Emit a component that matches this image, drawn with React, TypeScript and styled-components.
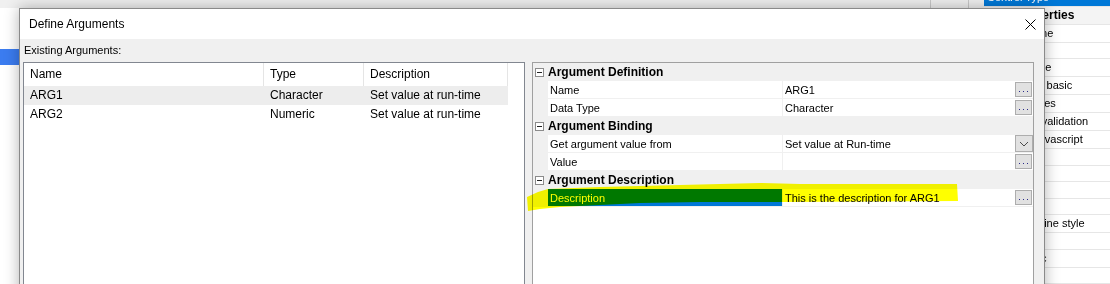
import React from "react";
import styled, { createGlobalStyle } from "styled-components";

const GlobalStyle = createGlobalStyle`
  html, body { margin: 0; padding: 0; background: #ffffff; }
  body { font-family: "Liberation Sans", Arial, sans-serif; color: #000; }
  * { box-sizing: border-box; }
`;

const Desktop = styled.div`
  position: relative;
  width: 1110px;
  height: 284px;
  overflow: hidden;
  background: #ffffff;
  display: flex;
  isolation: isolate;
`;

/* ---------- background application ---------- */
const BackLeft = styled.div`
  width: 984px;
  display: flex;
  flex-direction: column;
`;

const TopStrip = styled.div`
  height: 8px;
  background: #f0f0f0;
  display: flex;
  justify-content: flex-end;
`;

const StripCell = styled.div<{ $w: number }>`
  width: ${(p) => p.$w}px;
  border-left: 1px solid #c9c9c9;
`;

const TreeSelection = styled.div`
  margin-top: 41px;
  width: 20px;
  height: 16px;
  background: #3b7cf0;
`;

const BackRight = styled.div`
  flex: 1;
  margin-top: -11px;
  display: flex;
  flex-direction: column;
  font-size: 11px;
`;

const PanelRow = styled.div<{ $kind?: "selected" | "category" }>`
  height: 18px;
  line-height: 17px;
  border-bottom: 1px solid #e6e6e6;
  white-space: nowrap;
  padding-left: ${(p) => (p.$kind === "selected" ? 3 : p.$kind === "category" ? 31 : 40)}px;
  background: ${(p) =>
    p.$kind === "selected" ? "#0078d7" : p.$kind === "category" ? "#f4f4f4" : "#ffffff"};
  color: ${(p) => (p.$kind === "selected" ? "#ffffff" : "#000")};
  font-weight: ${(p) => (p.$kind === "category" ? "bold" : "normal")};
  font-size: ${(p) => (p.$kind === "category" ? 12 : 11)}px;
`;

/* ---------- dialog ---------- */
const Dialog = styled.section`
  position: absolute;
  left: 19px;
  top: 8px;
  width: 1026px;
  height: 300px;
  border: 1px solid #8a8a8a;
  background: #f0f0f0;
  box-shadow: 0 0 14px rgba(0, 0, 0, 0.3);
  display: flex;
  flex-direction: column;
`;

const TitleBar = styled.header`
  height: 30px;
  flex-shrink: 0;
  background: #ffffff;
  display: flex;
  align-items: center;
  justify-content: space-between;
  padding: 0 8px 0 9px;
  font-size: 12px;
`;

const CloseIcon = styled.svg`
  width: 11px;
  height: 11px;
  display: block;
`;

const Body = styled.div`
  flex: 1;
  min-height: 0;
  display: flex;
  flex-direction: column;
  padding: 0 10px 0 3px;
`;

const SectionLabel = styled.div`
  height: 23px;
  line-height: 22px;
  font-size: 11px;
  padding-left: 1px;
`;

const Panes = styled.div`
  flex: 1;
  min-height: 0;
  display: grid;
  grid-template-columns: 502px 502px;
  column-gap: 7px;
`;

/* list view */
const ListBox = styled.div`
  border: 1px solid #828790;
  background: #ffffff;
  font-size: 12px;
`;

const ListGrid = styled.div<{ $head?: boolean; $selected?: boolean }>`
  display: grid;
  grid-template-columns: 240px 100px 144px;
  width: 484px;
  height: ${(p) => (p.$head ? 23 : 19)}px;
  line-height: ${(p) => (p.$head ? 23 : 19)}px;
  background: ${(p) => (p.$selected ? "#ededed" : "#ffffff")};
`;

const ListCell = styled.div<{ $head?: boolean }>`
  padding-left: 6px;
  white-space: nowrap;
  overflow: hidden;
  border-right: ${(p) => (p.$head ? "1px solid #e5e5e5" : "none")};
`;

/* property grid */
const PropGrid = styled.div`
  border: 1px solid #a0a0a0;
  background: #ffffff;
  font-size: 11px;
`;

const CategoryRow = styled.div`
  height: 18px;
  background: #f0f0f0;
  display: flex;
  align-items: center;
  font-weight: bold;
  font-size: 12px;
  white-space: nowrap;
`;

const Expander = styled.svg`
  width: 9px;
  height: 9px;
  margin: 0 4px 0 2px;
  display: block;
  flex-shrink: 0;
`;

const PropRow = styled.div`
  display: grid;
  grid-template-columns: 15px 235px 250px;
  height: 18px;
`;

const Gutter = styled.div`
  background: #f0f0f0;
`;

const NameCell = styled.div<{ $selected?: boolean }>`
  padding-left: 2px;
  line-height: 18px;
  border-right: 1px solid #f0f0f0;
  border-bottom: 1px solid #f0f0f0;
  white-space: nowrap;
  overflow: hidden;
  background: ${(p) => (p.$selected ? "#0078d7" : "#ffffff")};
  color: ${(p) => (p.$selected ? "#ffffff" : "#000")};
`;

const ValueCell = styled.div`
  display: flex;
  align-items: center;
  justify-content: space-between;
  padding-left: 2px;
  border-bottom: 1px solid #f0f0f0;
  white-space: nowrap;
`;

const ValueText = styled.span`
  padding-top: 1px;
`;

const EllipsisButton = styled.div`
  width: 17px;
  height: 15px;
  margin-right: 1px;
  background: #e1e1e1;
  border: 1px solid #adadad;
  display: flex;
  align-items: center;
  justify-content: center;
`;

const DropButton = styled.div`
  width: 18px;
  height: 17px;
  align-self: flex-start;
  background: #e1e1e1;
  border: 1px solid #adadad;
  display: flex;
  align-items: center;
  justify-content: center;
`;

const Highlighter = styled.svg`
  position: absolute;
  left: 0;
  top: 0;
  width: 1110px;
  height: 284px;
  pointer-events: none;
  mix-blend-mode: multiply;
`;

const Dots = () => (
  <svg width="15" height="13" viewBox="0 0 15 13">
    <rect x="3" y="8" width="1" height="1" fill="#2a2a8a" />
    <rect x="7" y="8" width="1" height="1" fill="#2a2a8a" />
    <rect x="11" y="8" width="1" height="1" fill="#2a2a8a" />
  </svg>
);

const Chevron = () => (
  <svg width="16" height="15" viewBox="0 0 16 15">
    <polyline points="4,6 8,10 12,6" fill="none" stroke="#4a4a4a" strokeWidth="1" />
  </svg>
);

const Minus = () => (
  <Expander viewBox="0 0 9 9">
    <rect x="0.5" y="0.5" width="8" height="8" fill="#ffffff" stroke="#8b8b8b" />
    <rect x="2" y="4" width="5" height="1" fill="#222" />
  </Expander>
);

type Prop = { name: string; value: string; button: "dots" | "drop"; selected?: boolean };
type Section = { title: string; props: Prop[] };

const sections: Section[] = [
  {
    title: "Argument Definition",
    props: [
      { name: "Name", value: "ARG1", button: "dots" },
      { name: "Data Type", value: "Character", button: "dots" },
    ],
  },
  {
    title: "Argument Binding",
    props: [
      { name: "Get argument value from", value: "Set value at Run-time", button: "drop" },
      { name: "Value", value: "", button: "dots" },
    ],
  },
  {
    title: "Argument Description",
    props: [
      { name: "Description", value: "This is the description for ARG1", button: "dots", selected: true },
    ],
  },
];

const args = [
  { name: "ARG1", type: "Character", desc: "Set value at run-time" },
  { name: "ARG2", type: "Numeric", desc: "Set value at run-time" },
];

const backRows: { text: string; kind?: "selected" | "category" }[] = [
  { text: "Control Type", kind: "selected" },
  { text: "Properties", kind: "category" },
  { text: "Name" },
  { text: "" },
  { text: "Value" },
  { text: "Use basic" },
  { text: "Tables" },
  { text: "On validation" },
  { text: "In javascript" },
  { text: "" },
  { text: "" },
  { text: "" },
  { text: "" },
  { text: "Outline style" },
  { text: "" },
  { text: "Misc" },
  { text: "" },
];

export default function App() {
  return (
    <>
      <GlobalStyle />
      <Desktop>
        <BackLeft>
          <TopStrip>
            <StripCell $w={38} />
            <StripCell $w={16} />
          </TopStrip>
          <TreeSelection />
        </BackLeft>
        <BackRight>
          {backRows.map((r, i) => (
            <PanelRow key={i} $kind={r.kind}>
              {r.text}
            </PanelRow>
          ))}
        </BackRight>

        <Dialog>
          <TitleBar>
            <span>Define Arguments</span>
            <CloseIcon viewBox="0 0 11 11">
              <path d="M0.5 0.5 L10.5 10.5 M10.5 0.5 L0.5 10.5" stroke="#000" strokeWidth="1" />
            </CloseIcon>
          </TitleBar>
          <Body>
            <SectionLabel>Existing Arguments:</SectionLabel>
            <Panes>
              <ListBox>
                <ListGrid $head>
                  <ListCell $head>Name</ListCell>
                  <ListCell $head>Type</ListCell>
                  <ListCell $head>Description</ListCell>
                </ListGrid>
                {args.map((a, i) => (
                  <ListGrid key={a.name} $selected={i === 0}>
                    <ListCell>{a.name}</ListCell>
                    <ListCell>{a.type}</ListCell>
                    <ListCell>{a.desc}</ListCell>
                  </ListGrid>
                ))}
              </ListBox>
              <PropGrid>
                {sections.map((s) => (
                  <React.Fragment key={s.title}>
                    <CategoryRow>
                      <Minus />
                      {s.title}
                    </CategoryRow>
                    {s.props.map((p) => (
                      <PropRow key={p.name}>
                        <Gutter />
                        <NameCell $selected={p.selected}>{p.name}</NameCell>
                        <ValueCell>
                          <ValueText>{p.value}</ValueText>
                          {p.button === "dots" ? (
                            <EllipsisButton>
                              <Dots />
                            </EllipsisButton>
                          ) : (
                            <DropButton>
                              <Chevron />
                            </DropButton>
                          )}
                        </ValueCell>
                      </PropRow>
                    ))}
                  </React.Fragment>
                ))}
              </PropGrid>
            </Panes>
          </Body>
        </Dialog>

        <Highlighter viewBox="0 0 1110 284">
          <polygon
            points="527,197 538,192 548,189 600,187 680,185 760,183 800,184 957,184 958,201 783,202 700,202 640,203 600,205 560,207 540,209 528,211"
            fill="#ffff00"
          />
        </Highlighter>
      </Desktop>
    </>
  );
}
